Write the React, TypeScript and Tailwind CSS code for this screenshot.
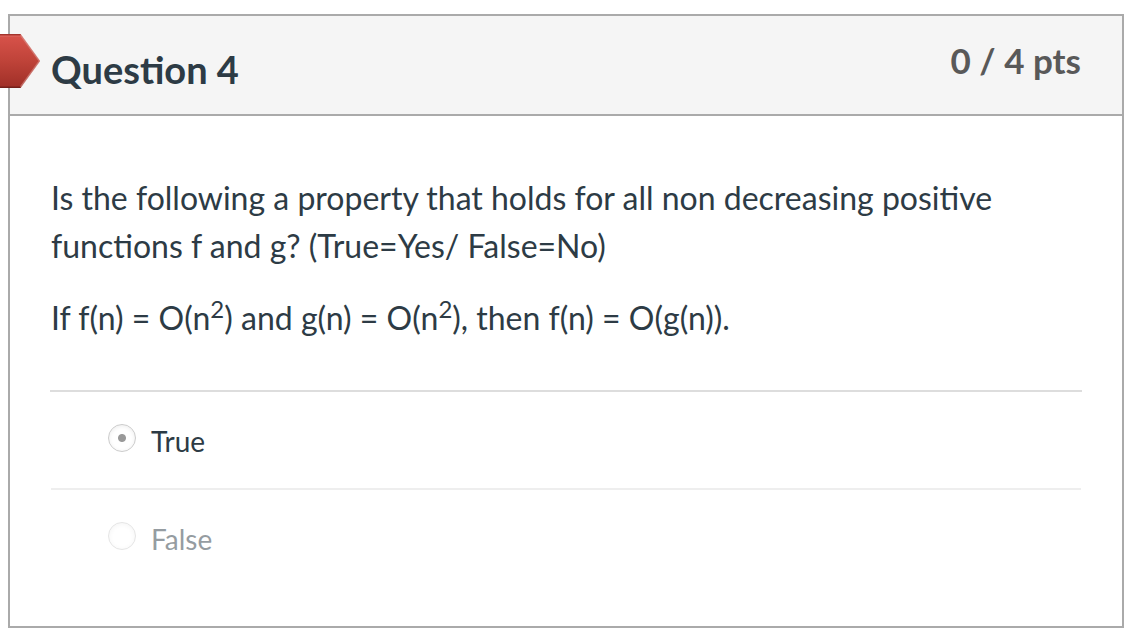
const options = [
  { label: "True", selected: true },
  { label: "False", selected: false },
];

function Flag() {
  return (
    <svg className="absolute top-[18px] -left-2.5 h-[54px] w-10" viewBox="0 0 40 54" aria-hidden="true">
      <defs>
        <linearGradient id="flag" x1="0" y1="0" x2="0" y2="1">
          <stop offset="0" stopColor="#d9534b" />
          <stop offset="0.5" stopColor="#bf4339" />
          <stop offset="1" stopColor="#9f2f27" />
        </linearGradient>
      </defs>
      <path d="M0 0H20.5L40 27L20.5 54H0Z" fill="url(#flag)" />
      <path d="M20.5 1L39.4 27L20.5 53" fill="none" stroke="#d9968f" strokeOpacity="0.55" strokeWidth="1.5" />
      <path d="M0 0.75H20.5" stroke="#a3342d" strokeWidth="1.5" />
      <path d="M0 2.2H20.5" stroke="#d9655d" strokeWidth="1" />
      <path d="M0 53.25H20.5" stroke="#74201b" strokeWidth="1.5" />
    </svg>
  );
}

export default function App() {
  return (
    <main className="min-h-screen bg-white px-2 pt-3.5 pb-2.5 font-['Lato',sans-serif] text-[#2d3b45]">
      <article className="border-2 border-[#aaaaaa]">
        <header className="relative flex items-start justify-between border-b-2 border-[#aaaaaa] bg-[#f5f5f5] px-[41px] py-6">
          <Flag />
          <h2 className="pt-2 text-[38px] leading-[42px] font-bold">Question 4</h2>
          <div className="text-[35px] leading-10 font-bold text-[#595959]">0 / 4 pts</div>
        </header>
        <div className="px-10 pt-[58px] pb-[37px]">
          <div className="px-px text-[32px] leading-12">
            <p>
              Is the following a property that holds for all non decreasing positive functions f and g? (True=Yes/ False=No)
            </p>
            <p className="mt-6">
              If f(n) = O(n<sup className="text-[24px]">2</sup>) and g(n) = O(n<sup className="text-[24px]">2</sup>), then
              f(n) = O(g(n)).
            </p>
          </div>
          <fieldset aria-label="Answer" className="mt-12 border-t-2 border-[#dddddd] px-px">
            {options.map((option, index) => (
              <label
                key={option.label}
                className={`flex items-start gap-[15px] pt-8 pl-[57px] text-[28px] leading-7 ${
                  index > 0 ? "border-t-2 border-[#eeeeee] pb-9" : "pb-[33px]"
                }`}
              >
                <input
                  type="radio"
                  name="answer"
                  defaultChecked={option.selected}
                  className={`size-7 shrink-0 appearance-none rounded-full border border-[#cccccc] shadow-[inset_0_1px_4px_#00000014] checked:bg-[radial-gradient(circle,#999999_3.5px,transparent_4.5px)] ${
                    option.selected ? "" : "opacity-50"
                  }`}
                />
                <span className={`pt-[3px] ${option.selected ? "" : "opacity-50"}`}>{option.label}</span>
              </label>
            ))}
          </fieldset>
        </div>
      </article>
    </main>
  );
}
